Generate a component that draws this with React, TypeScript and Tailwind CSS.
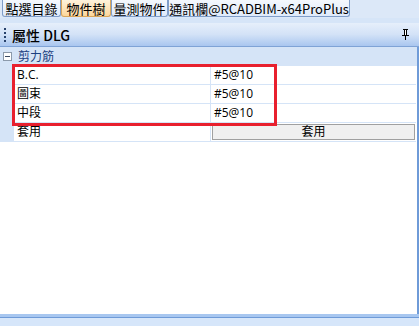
import React from "react";

const font = { fontFamily: '"Open Sans", "Noto Sans CJK TC", sans-serif' };
const tabFont = { fontFamily: '"Noto Sans CJK TC", "Noto Sans", sans-serif' };

function Tab({ label, active, w }: { label: string; active?: boolean; w: string }) {
  return (
    <div
      className={`${w} h-[17px] flex items-center justify-center whitespace-nowrap text-[13px] leading-none border border-t-0 rounded-b-[3px] ${
        active
          ? "bg-gradient-to-b from-[#fff3dc] to-[#fcd79b] border-[#d9a65a]"
          : "bg-gradient-to-b from-[#f4f8fd] to-[#dfeafa] border-[#7f9dc9]"
      }`}
      style={tabFont}
    >
      {label}
    </div>
  );
}

function Row({ name, value }: { name: string; value: string }) {
  return (
    <div className="flex h-[19px] text-[12px] leading-none">
      <div className="w-[14px] bg-[#d5e4f7]" />
      <div className="w-[197px] bg-white border-b border-r border-[#d5e4f7] flex items-center pl-[3px]">{name}</div>
      <div className="w-[205px] bg-white border-b border-[#d5e4f7] flex items-center pl-[3px]">{value}</div>
    </div>
  );
}

export default function App() {
  return (
    <div className="w-[419px] h-[326px] bg-[#d6e5f8] flex flex-col overflow-hidden text-black" style={font}>
      <div className="flex h-[18px] pl-[2px] bg-[#dce8f8]">
        <Tab label="點選目錄" w="w-[59px]" />
        <Tab label="物件樹" w="w-[50px]" active />
        <Tab label="量測物件" w="w-[57px]" />
        <Tab label="通訊欄@RCADBIM-x64ProPlus" w="w-[182px]" />
      </div>
      <div className="h-[5px]" />
      <div className="h-[24px] bg-gradient-to-b from-[#e6effb] via-[#d3e2f7] to-[#a9c6ef] border-b border-[#7fa3d6] flex items-center">
        <div className="ml-[4px] flex flex-col gap-[2px]">
          <div className="w-[2px] h-[2px] bg-[#27416b]" />
          <div className="w-[2px] h-[2px] bg-[#27416b]" />
          <div className="w-[2px] h-[2px] bg-[#27416b]" />
          <div className="w-[2px] h-[2px] bg-[#27416b]" />
        </div>
        <div className="ml-[6px] text-[14px] font-medium leading-none" style={tabFont}>屬性 DLG</div>
        <div className="ml-auto mr-[9px]">
          <svg width="9" height="11" viewBox="0 0 9 11">
            <path d="M2 0h5v1H6v5h2v1H5v4H4V7H1V6h2V1H2z" fill="#000" />
            <rect x="4" y="1" width="1" height="5" fill="#fff" />
          </svg>
        </div>
      </div>
      <div className="flex-1 bg-white border-r-2 border-[#6f9bd8] relative flex flex-col">
        <div className="flex h-[19px] bg-[#d5e4f7] items-center text-[12px] leading-none">
          <div className="ml-[3px] w-[9px] h-[9px] border border-[#8c9aab] bg-white flex items-center justify-center">
            <div className="w-[5px] h-[1px] bg-[#3b4b63]" />
          </div>
          <div className="ml-[6px] text-[#1b3f80]">剪力筋</div>
        </div>
        <Row name="B.C." value="#5@10" />
        <Row name="圖束" value="#5@10" />
        <Row name="中段" value="#5@10" />
        <div className="flex h-[19px] text-[12px] leading-none">
          <div className="w-[14px] bg-[#d5e4f7]" />
          <div className="w-[197px] bg-white border-b border-r border-[#d5e4f7] flex items-center pl-[3px]">套用</div>
          <div className="w-[205px] bg-white border-b border-[#d5e4f7] flex items-center px-[1px] py-[1px]">
            <div className="w-full h-full bg-[#f0f0f0] border border-[#a0a0a0] flex items-center justify-center">套用</div>
          </div>
        </div>
        <div className="absolute left-[12px] top-[17px] w-[265px] h-[62px] border-[3px] border-[#e8202e]" />
      </div>
      <div className="h-[4px] bg-[#a8c7f0] border-b border-[#6f9bd8]" />
      <div className="h-[8px] bg-[#d6e6fa]" />
    </div>
  );
}
